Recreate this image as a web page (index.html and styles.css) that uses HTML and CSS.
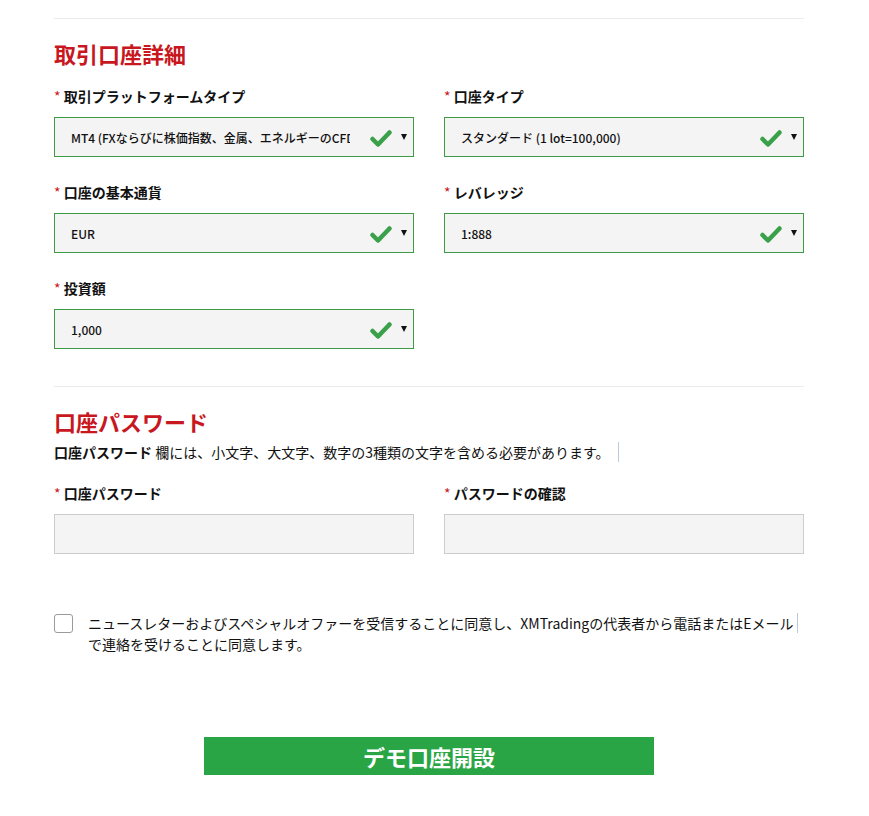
FILE: index.html
```html
<!DOCTYPE html>
<html lang="ja">
<head>
    <meta charset="UTF-8">
    <meta name="viewport" content="width=device-width, initial-scale=1.0">
    <title>デモ口座開設</title>
    <link rel="stylesheet" href="styles.css">
</head>
<body>
<div class="container">
    <hr class="divider">

    <h2 class="section-title">取引口座詳細</h2>
    <div class="form-grid">
        <div class="form-group">
            <label><span class="req">*</span> 取引プラットフォームタイプ</label>
            <div class="select-box">
                <span class="select-text">MT4 (FXならびに株価指数、金属、エネルギーのCFD)</span>
                <svg class="check" width="22" height="18" viewBox="0 0 22 18"><path d="M2.5 10 L8 15.5 L19.5 3.5" fill="none" stroke="#3aa04a" stroke-width="4.5" stroke-linecap="round" stroke-linejoin="round"/></svg>
                <span class="arrow"></span>
            </div>
        </div>
        <div class="form-group">
            <label><span class="req">*</span> 口座タイプ</label>
            <div class="select-box">
                <span class="select-text">スタンダード (1 lot=100,000)</span>
                <svg class="check" width="22" height="18" viewBox="0 0 22 18"><path d="M2.5 10 L8 15.5 L19.5 3.5" fill="none" stroke="#3aa04a" stroke-width="4.5" stroke-linecap="round" stroke-linejoin="round"/></svg>
                <span class="arrow"></span>
            </div>
        </div>
        <div class="form-group">
            <label><span class="req">*</span> 口座の基本通貨</label>
            <div class="select-box">
                <span class="select-text">EUR</span>
                <svg class="check" width="22" height="18" viewBox="0 0 22 18"><path d="M2.5 10 L8 15.5 L19.5 3.5" fill="none" stroke="#3aa04a" stroke-width="4.5" stroke-linecap="round" stroke-linejoin="round"/></svg>
                <span class="arrow"></span>
            </div>
        </div>
        <div class="form-group">
            <label><span class="req">*</span> レバレッジ</label>
            <div class="select-box">
                <span class="select-text">1:888</span>
                <svg class="check" width="22" height="18" viewBox="0 0 22 18"><path d="M2.5 10 L8 15.5 L19.5 3.5" fill="none" stroke="#3aa04a" stroke-width="4.5" stroke-linecap="round" stroke-linejoin="round"/></svg>
                <span class="arrow"></span>
            </div>
        </div>
        <div class="form-group">
            <label><span class="req">*</span> 投資額</label>
            <div class="select-box">
                <span class="select-text">1,000</span>
                <svg class="check" width="22" height="18" viewBox="0 0 22 18"><path d="M2.5 10 L8 15.5 L19.5 3.5" fill="none" stroke="#3aa04a" stroke-width="4.5" stroke-linecap="round" stroke-linejoin="round"/></svg>
                <span class="arrow"></span>
            </div>
        </div>
    </div>

    <hr class="divider second">

    <h2 class="section-title">口座パスワード</h2>
    <p class="note"><span class="note-inner"><b>口座パスワード</b> 欄には、小文字、大文字、数字の3種類の文字を含める必要があります。</span></p>
    <div class="form-grid">
        <div class="form-group">
            <label><span class="req">*</span> 口座パスワード</label>
            <input type="password" class="text-input">
        </div>
        <div class="form-group">
            <label><span class="req">*</span> パスワードの確認</label>
            <input type="password" class="text-input">
        </div>
    </div>

    <div class="agree">
        <span class="checkbox"></span>
        <p class="agree-text"><span class="agree-inner">ニュースレターおよびスペシャルオファーを受信することに同意し、XMTradingの代表者から電話またはEメール</span><br>で連絡を受けることに同意します。</p>
    </div>

    <div class="submit-row">
        <button type="submit" class="submit">デモ口座開設</button>
    </div>
</div>
</body>
</html>
```

FILE: styles.css
```css
body {
    margin: 0;
    background-color: #ffffff;
    font-family: "Noto Sans CJK JP", "Noto Sans", sans-serif;
    color: #111111;
}

.container {
    width: 750px;
    margin-left: 54px;
    padding-top: 18px;
}

.divider {
    border: none;
    border-top: 1px solid #ececec;
    margin: 0;
}

.divider.second {
    margin-top: 37px;
}

.section-title {
    font-size: 22px;
    line-height: 24px;
    color: #c8171e;
    font-weight: bold;
    margin: 22px 0 0;
}

.form-grid {
    display: grid;
    grid-template-columns: repeat(2, minmax(0, 1fr));
    column-gap: 30px;
    row-gap: 25px;
    margin-top: 21px;
}

.form-group label {
    display: block;
    font-size: 14px;
    line-height: 20px;
    font-weight: bold;
    margin-bottom: 11px;
}

.req {
    color: #c8171e;
    font-weight: normal;
}

.select-box {
    height: 40px;
    box-sizing: border-box;
    border: 1px solid #3f9a46;
    background-color: #f4f4f4;
    display: flex;
    align-items: center;
    padding: 0 6px 0 16px;
}

.select-text {
    flex: 1;
    min-width: 0;
    font-size: 12px;
    font-weight: 500;
    white-space: nowrap;
    overflow: hidden;
    margin-right: 20px;
}

.check {
    flex: none;
    margin-right: 9px;
    margin-top: 2px;
}

.arrow {
    flex: none;
    width: 0;
    height: 0;
    border-left: 3px solid transparent;
    border-right: 3px solid transparent;
    border-top: 6px solid #111111;
}

.note {
    font-size: 14px;
    line-height: 20px;
    margin: 9px 0 0;
}

.note-inner {
    border-right: 1px solid #b9c9de;
    padding-right: 8px;
}

.note + .form-grid {
    margin-top: 21px;
}

.text-input {
    display: block;
    width: 100%;
    height: 40px;
    box-sizing: border-box;
    border: 1px solid #cccccc;
    background-color: #f4f4f4;
    outline: none;
}

.agree {
    display: flex;
    align-items: flex-start;
    gap: 15px;
    margin-top: 59px;
}

.checkbox {
    flex: none;
    width: 19px;
    height: 19px;
    box-sizing: border-box;
    border: 1px solid #9a9a9a;
    border-radius: 3px;
    margin-top: 1px;
}

.agree-text {
    font-size: 14px;
    line-height: 21px;
    margin: 0;
}

.agree-inner {
    border-right: 1px solid #b9c9de;
    padding-right: 3px;
}

.submit-row {
    display: flex;
    justify-content: center;
    margin-top: 82px;
}

.submit {
    width: 450px;
    height: 38px;
    border: none;
    background-color: #2aa545;
    color: #ffffff;
    font-family: "Noto Sans CJK JP", sans-serif;
    font-size: 22px;
    font-weight: bold;
    cursor: pointer;
}
```
